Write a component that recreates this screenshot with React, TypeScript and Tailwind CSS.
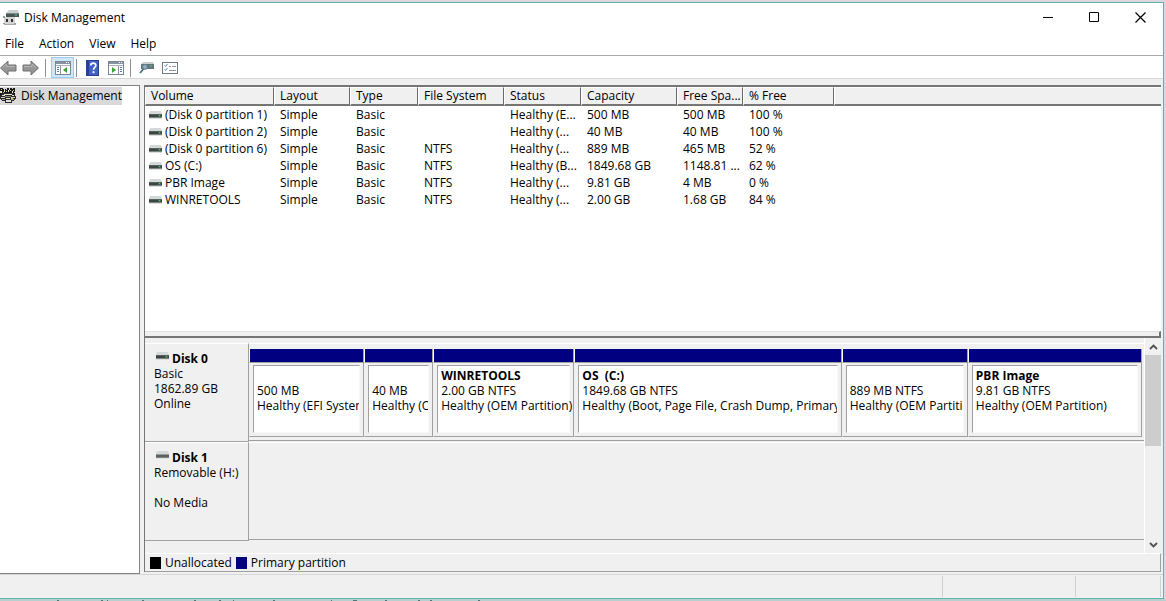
import type { ReactNode } from "react";

const volumes = [
  ["(Disk 0 partition 1)", "Simple", "Basic", "", "Healthy (E...", "500 MB", "500 MB", "100 %"],
  ["(Disk 0 partition 2)", "Simple", "Basic", "", "Healthy (...", "40 MB", "40 MB", "100 %"],
  ["(Disk 0 partition 6)", "Simple", "Basic", "NTFS", "Healthy (...", "889 MB", "465 MB", "52 %"],
  ["OS (C:)", "Simple", "Basic", "NTFS", "Healthy (B...", "1849.68 GB", "1148.81 ...", "62 %"],
  ["PBR Image", "Simple", "Basic", "NTFS", "Healthy (...", "9.81 GB", "4 MB", "0 %"],
  ["WINRETOOLS", "Simple", "Basic", "NTFS", "Healthy (...", "2.00 GB", "1.68 GB", "84 %"],
];

const columns = ["Volume", "Layout", "Type", "File System", "Status", "Capacity", "Free Spa...", "% Free"];

type PartitionInfo = { name: string; size: string; status: string; clipped: boolean };

const partitions: PartitionInfo[] = [
  { name: "", size: "500 MB", status: "Healthy (EFI System", clipped: true },
  { name: "", size: "40 MB", status: "Healthy (O", clipped: true },
  { name: "WINRETOOLS", size: "2.00 GB NTFS", status: "Healthy (OEM Partition)", clipped: false },
  { name: "OS  (C:)", size: "1849.68 GB NTFS", status: "Healthy (Boot, Page File, Crash Dump, Primary P", clipped: true },
  { name: "", size: "889 MB NTFS", status: "Healthy (OEM Partitio", clipped: true },
  { name: "PBR Image", size: "9.81 GB NTFS", status: "Healthy (OEM Partition)", clipped: false },
];

function DriveIcon({ removable = false }: { removable?: boolean }) {
  return (
    <svg width="13" height="8" viewBox="0 0 13 8" className="shrink-0" aria-hidden="true">
      <path d="M1 0h11l1 3H0z" fill="#d3d9d8" />
      <rect y="3" width="13" height="4" fill={removable ? "#5c6060" : "#3c4444"} />
      <rect y="3" width="13" height="1" fill={removable ? "#959c9b" : "#59615f"} />
      {!removable && <rect x="9" y="4" width="3" height="2" fill="#3a6b48" />}
      {!removable && <rect x="10" y="4" width="1" height="1" fill="#5fc678" />}
      <rect y="6" width="13" height="1" fill="#7d8483" />
      <rect y="7" width="13" height="1" fill="#dcdfde" />
    </svg>
  );
}

function AppIcon() {
  return (
    <svg width="16" height="16" viewBox="0 0 16 16" aria-hidden="true">
      <path d="M6 0h9l1 3H3z" fill="#c9d0d0" />
      <path d="M3 3h13v4H3z" fill="#4b5555" />
      <path d="M3 3h13v1H3z" fill="#7f8989" />
      <path d="M12 4h2v2h-2z" fill="#4d9a70" />
      <path d="M1 7h11v7H1z" fill="#d5d5d5" />
      <path d="M0 6h2v2H0zM0 13h2v1H0zM11 13h2v1h-2z" fill="#9a9a9a" />
      <path d="M3 9h2v3H3zM8 9h2v3H8z" fill="#333" />
      <path d="M1 14h12v1H1z" fill="#aaa" />
    </svg>
  );
}

function TreeIcon() {
  return (
    <svg width="16" height="16" viewBox="0 0 16 16" shapeRendering="crispEdges" aria-hidden="true">
      <path d="M0 0h3v1h1v1h1V1h1v1h1V0h2v2h1V0h2v1h1V0h2v4h-1v1h1v2H0V5h1V3H0z" fill="#161616" />
      <path d="M1 1h1v1H1zM6 3h1v1H6zM10 2h1v1h-1zM13 2h1v1h-1zM3 4h1v1H3z" fill="#d9d36b" />
      <path d="M4 2h1v2H4zM8 2h1v2H8zM12 3h1v2h-1zM1 3h1v2H1z" fill="#eee" />
      <path d="M3 5h10l3 3v3l-2 2h-2v2H5v-2H2l-2-2V8z" fill="#2a2a26" />
      <path d="M4 6h8v1H4zM2 7h3v1H2zM12 7h2v1h-2z" fill="#e2e2d6" />
      <path d="M5 8h6v1H5z" fill="#8c8c80" />
      <path d="M1 9h4v1H1zM11 9h4v1h-4z" fill="#d0d0c4" />
      <path d="M2 11h3v1H2zM11 11h3v1h-3z" fill="#a8a898" />
      <path d="M6 10h4v1H6zM6 12h5v2H6z" fill="#e0e0d4" />
      <path d="M11 10h2v1h-2z" fill="#d9d33b" />
    </svg>
  );
}

function ArrowIcon({ forward = false }: { forward?: boolean }) {
  return (
    <svg width="17" height="16" viewBox="0 0 17 16" aria-hidden="true">
      <path
        d={forward ? "M16.500 8L9 1v4H1v6h8v4z" : "M0.500 8l7.500-7v4h8v6H8v4z"}
        fill="#969696"
        stroke="#707070"
        strokeLinejoin="round"
      />
      <path d={forward ? "M2 6.500h8V4l3.500 3.500" : "M3 7.500L6.500 4v2.500h8"} fill="none" stroke="#b5b5b5" />
    </svg>
  );
}

function PaneIcon({ side }: { side: "left" | "right" }) {
  const left = side === "left";
  return (
    <svg width="16" height="14" viewBox="0 0 16 14" aria-hidden="true">
      <rect x="0.5" y="0.5" width="15" height="13" fill="#fff" stroke="#7b8794" />
      <path d="M1 1h14v2H1z" fill="#8793a0" />
      <path d="M11 1h1v1h-1zM13 1h1v1h-1z" fill="#fff" />
      <path d="M1 4h14v1H1z" fill="#a9b3bd" />
      <path d={left ? "M5 5h1v8H5z" : "M10 5h1v8h-1z"} fill="#8793a0" />
      <path d={left ? "M2 6h2v1H2zM2 8h2v1H2zM2 10h2v1H2z" : "M12 6h2v1h-2zM12 8h2v1h-2zM12 10h2v1h-2z"} fill="#5b7ea6" />
      <path d={left ? "M12 6v6L8 9z" : "M4 6v6l4-3z"} fill="#38a338" />
    </svg>
  );
}

function HelpIcon() {
  return (
    <svg width="13" height="16" viewBox="0 0 13 16" aria-hidden="true">
      <rect x="0.5" y="0.5" width="12" height="15" fill="#4160c8" stroke="#2b3f94" />
      <path d="M1 1h2v14H1z" fill="#2a3f9c" />
      <path d="M4.8 5.600c0-3.200 5-3.200 5-.2 0 2-2.300 2-2.300 4.400" fill="none" stroke="#fff" strokeWidth="1.7" />
      <rect x="6.600" y="11.200" width="1.900" height="1.900" fill="#fff" />
    </svg>
  );
}

function RescanIcon() {
  return (
    <svg width="15" height="13" viewBox="0 0 15 13" aria-hidden="true">
      <path d="M4 1h10l1 2H2z" fill="#c7cfcf" />
      <path d="M2 3h13v5H2z" fill="#66767a" />
      <path d="M11 4h2v2h-2z" fill="#3fae75" />
      <circle cx="6" cy="6" r="2.400" fill="#8fb0c0" stroke="#64808f" />
      <path d="M4.500 8L1 12" stroke="#4d6d84" strokeWidth="1.800" />
    </svg>
  );
}

function ChecklistIcon() {
  return (
    <svg width="16" height="12" viewBox="0 0 16 12" aria-hidden="true">
      <rect x="0.5" y="0.5" width="15" height="11" fill="#fff" stroke="#727a80" />
      <path d="M2.500 3.500l1 1 2-2.500M2.500 7.500l1 1 2-2.500" fill="none" stroke="#4a86c5" />
      <path d="M7 4.500h2M10 4.500h4M7 8.500h7" stroke="#8f989e" />
    </svg>
  );
}

function ToolButton({ label, className, children }: { label: string; className: string; children: ReactNode }) {
  return (
    <button type="button" aria-label={label} className={"flex shrink-0 items-center justify-center " + className}>
      {children}
    </button>
  );
}

function ToolSeparator() {
  return <span className="h-[18px] w-px shrink-0 bg-[#8d8d8d]" />;
}

function Partition({ name, size, status, clipped }: PartitionInfo) {
  return (
    <div className="flex min-w-0 flex-col border-r border-[#a0a0a0]">
      <div className="h-[13px] border-l border-white bg-[#000080]" />
      <div className="flex min-h-0 flex-1 border-y border-l border-y-[#a0a0a0] border-l-[#f0f0f0] px-[3px] pt-[2px] pb-[3px]">
        <div className="min-w-0 flex-1 border-t border-r border-b border-l border-t-[#a0a0a0] border-r-[#f8f8f8] border-b-[#f8f8f8] border-l-[#a0a0a0] bg-white pt-[2px] pl-[3px] leading-[15px]">
          <div className="h-[15px] overflow-hidden font-bold whitespace-pre">{name}</div>
          <div className="overflow-hidden whitespace-nowrap">{size}</div>
          <div className={clipped ? "overflow-hidden whitespace-nowrap" : "whitespace-nowrap"}>{status}</div>
        </div>
      </div>
    </div>
  );
}

function DiskLabel({ name, lines, removable = false }: { name: string; lines: string[]; removable?: boolean }) {
  return (
    <div className="w-[104px] shrink-0 border-t border-r border-b border-t-white border-r-[#a0a0a0] border-b-[#a0a0a0] pt-[7px] pl-[9px] leading-[15px]">
      <div className="flex gap-[3px] pl-[2px] font-bold">
        <span className="pt-px">
          <DriveIcon removable={removable} />
        </span>
        {name}
      </div>
      {lines.map((line, i) => (
        <div key={i} className="h-[15px] whitespace-nowrap">
          {line}
        </div>
      ))}
    </div>
  );
}

export default function App() {
  return (
    <div className="flex h-screen min-h-[480px] flex-col overflow-hidden bg-[#ddd6dd] pt-[2px] font-['Open_Sans','Noto_Sans',sans-serif] text-[12px] text-black">
      <div className="mr-[2px] flex min-h-0 flex-1 flex-col border-t border-r border-b border-[#5fb3ae] bg-[#f0f0f0]">
        <header className="flex h-[28px] shrink-0 items-center bg-white">
          <div className="flex flex-1 items-center gap-[5px] pt-[2px] pl-[3px]">
            <AppIcon />
            <h1>Disk Management</h1>
          </div>
          <ToolButton label="Minimize" className="h-[28px] w-[46px]">
            <svg width="11" height="11" viewBox="0 0 11 11"><path d="M0 5.500h10" stroke="#000" /></svg>
          </ToolButton>
          <ToolButton label="Maximize" className="h-[28px] w-[46px]">
            <svg width="11" height="11" viewBox="0 0 11 11"><path d="M.5 .5h9v9h-9z" fill="none" stroke="#000" /></svg>
          </ToolButton>
          <ToolButton label="Close" className="h-[28px] w-[46px]">
            <svg width="11" height="11" viewBox="0 0 11 11"><path d="M.5 .5l10 10M10.500 .5l-10 10" stroke="#000" strokeWidth="1.2" /></svg>
          </ToolButton>
        </header>

        <nav className="flex h-[25px] shrink-0 items-center gap-[15px] border-b border-[#a8a8a8] bg-white pt-[2px] pl-[5px]">
          <button type="button">File</button>
          <button type="button">Action</button>
          <button type="button">View</button>
          <button type="button">Help</button>
        </nav>

        <div className="flex h-[23px] shrink-0 items-center border-b border-[#d7d7d7] bg-white pt-px">
          <ToolButton label="Back" className="w-[17px]"><ArrowIcon /></ToolButton>
          <ToolButton label="Forward" className="mr-[6px] ml-[5px] w-[17px]"><ArrowIcon forward /></ToolButton>
          <ToolSeparator />
          <ToolButton label="Show/Hide Console Tree" className="mr-[2px] ml-[5px] h-[21px] w-[23px] border border-[#99cdf5] bg-[#cfe7fa]">
            <PaneIcon side="left" />
          </ToolButton>
          <ToolSeparator />
          <ToolButton label="Help" className="ml-[9px] w-[13px]"><HelpIcon /></ToolButton>
          <ToolButton label="Show/Hide Action Pane" className="mr-[6px] ml-[9px] w-[16px]"><PaneIcon side="right" /></ToolButton>
          <ToolSeparator />
          <ToolButton label="Rescan Disks" className="ml-[8px] w-[15px]"><RescanIcon /></ToolButton>
          <ToolButton label="Properties" className="ml-[8px] w-[16px]"><ChecklistIcon /></ToolButton>
        </div>

        <main className="flex min-h-0 flex-1 gap-[4px] pt-[6px] pr-[2px]">
          <aside className="w-[140px] shrink-0 border-t border-r border-b border-[#828282] bg-white pt-px">
            <a href="#disk-management" className="flex h-[18px] w-[122px] items-center gap-[5px] bg-[#d9d9d9]">
              <TreeIcon />
              <span className="whitespace-nowrap">Disk Management</span>
            </a>
          </aside>

          <div className="mb-[2px] flex min-w-0 flex-1 flex-col border-t-2 border-l border-[#767676]">
            <section aria-label="Volumes" className="min-h-0 flex-1 overflow-hidden bg-white">
              <table className="w-full table-fixed border-separate border-spacing-0 text-left">
                <colgroup>
                  <col className="w-[129px]" />
                  <col className="w-[76px]" />
                  <col className="w-[68px]" />
                  <col className="w-[86px]" />
                  <col className="w-[77px]" />
                  <col className="w-[96px]" />
                  <col className="w-[66px]" />
                  <col className="w-[91px]" />
                  <col />
                </colgroup>
                <thead>
                  <tr className="h-[19px] bg-[#f0f0f0]">
                    {columns.map((c) => (
                      <th
                        key={c}
                        className="border-t border-r border-b-2 border-l border-t-white border-r-[#696969] border-b-[#767676] border-l-white py-0 pl-[5px] leading-[16px] font-normal whitespace-nowrap"
                      >
                        {c}
                      </th>
                    ))}
                    <td className="border-t border-b-2 border-l border-t-white border-b-[#767676] border-l-white p-0" />
                  </tr>
                </thead>
                <tbody>
                  {volumes.map((v) => (
                    <tr key={v[0]} className="h-[17px]">
                      {v.map((cell, i) => (
                        <td key={i} className={i === 0 ? "py-0 pl-[4px] leading-[17px] whitespace-nowrap" : "py-0 pl-[6px] leading-[17px] whitespace-nowrap"}>
                          {i === 0 ? (
                            <span className="flex items-center gap-[3px]">
                              <DriveIcon />
                              {cell}
                            </span>
                          ) : (
                            cell
                          )}
                        </td>
                      ))}
                      <td />
                    </tr>
                  ))}
                </tbody>
              </table>
            </section>

            <div className="h-[7px] shrink-0 border-t border-r-2 border-b-2 border-t-[#e3e3e3] border-r-[#767676] border-b-[#767676] bg-[#f0f0f0]" />

            <section aria-label="Disks" className="flex shrink-0">
              <div className="min-w-0 flex-1 border-r border-white pt-[5px] pb-[12px]">
                <div className="flex h-[99px]">
                  <DiskLabel name="Disk 0" lines={["Basic", "1862.89 GB", "Online"]} />
                  <div className="mb-px min-w-0 flex-1 border-t border-b border-t-white border-b-[#a0a0a0] pt-[5px] pr-[2px] pb-[3px]">
                    <div className="grid h-full grid-cols-[115fr_69fr_141fr_267fr_126fr_174fr]">
                      {partitions.map((p, i) => (
                        <Partition key={i} {...p} />
                      ))}
                    </div>
                  </div>
                </div>
                <div className="flex h-[99px]">
                  <DiskLabel name="Disk 1" lines={["Removable (H:)", "", "No Media"]} removable />
                  <div className="mb-px min-w-0 flex-1 border-t border-b border-t-white border-b-[#a0a0a0]" />
                </div>
              </div>
              <div className="flex w-[16px] shrink-0 flex-col bg-[#f0f0f0]">
                <ToolButton label="Scroll up" className="h-[17px] w-full">
                  <svg width="9" height="6" viewBox="0 0 9 6"><path d="M1 5l3.500-3.500L8 5" fill="none" stroke="#505050" strokeWidth="1.800" /></svg>
                </ToolButton>
                <div className="h-[91px] bg-[#cdcdcd]" />
                <div className="flex-1" />
                <ToolButton label="Scroll down" className="h-[17px] w-full">
                  <svg width="9" height="6" viewBox="0 0 9 6"><path d="M1 1l3.500 3.500L8 1" fill="none" stroke="#505050" strokeWidth="1.800" /></svg>
                </ToolButton>
              </div>
            </section>

            <div className="flex h-[19px] shrink-0 items-center gap-[4px] border-t border-r border-b border-t-white border-r-[#a0a0a0] border-b-[#a0a0a0] pl-[5px]">
              <span className="h-[12px] w-[11px] bg-black" />
              <span>Unallocated</span>
              <span className="h-[12px] w-[11px] bg-[#000080]" />
              <span>Primary partition</span>
            </div>
          </div>
        </main>

        <footer className="flex h-[24px] shrink-0 border-t border-[#d7d7d7] pt-px pr-[2px] pb-px">
          <div className="flex-1 border-r border-[#d0d0d0]" />
          <div className="w-[133px] border-r border-[#d0d0d0]" />
          <div className="w-[85px] border-r border-[#d0d0d0]" />
        </footer>
      </div>
      <div className="h-[2px] shrink-0 bg-[#b5d0cf]">
        <svg width="540" height="2" viewBox="0 0 540 2" aria-hidden="true">
          <path
            d="M57 1.500h2M101 1.500h2M107 1.500h1M142 1.500h2M194 1.500h2M219 1.500h2M233 1.500h1M273 1.500h2M331 1.500h1M353 1.500h4M385 1.500h2M418 1.500h2M430 1.500h2M478 1.500h2"
            stroke="#4f7775"
          />
        </svg>
      </div>
    </div>
  );
}
